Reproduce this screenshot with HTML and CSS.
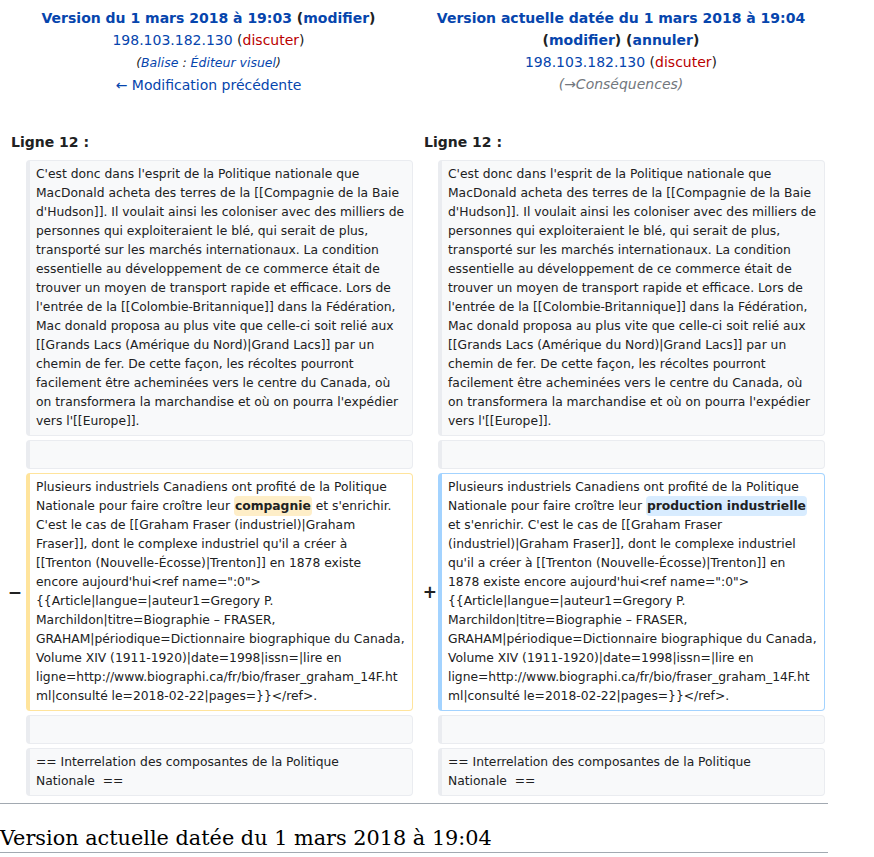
FILE: index.html
```html
<!DOCTYPE html>
<html lang="fr">
<head>
<meta charset="utf-8">
<title>Différence entre versions</title>
<link rel="stylesheet" href="styles.css">
</head>
<body>
<div class="page">
  <div class="diff">
    <div class="title otitle">
      <div class="t-head"><a class="lk" href="#">Version du 1 mars 2018 à 19:03</a> (<a class="lk" href="#">modifier</a>)</div>
      <div><a class="lk" href="#">198.103.182.130</a> (<a class="new" href="#">discuter</a>)</div>
      <div class="tags">(<a class="lk" href="#">Balise</a> : <a class="lk" href="#">Éditeur visuel</a>)</div>
      <div><a class="lk" href="#">← Modification précédente</a></div>
    </div>
    <div class="title ntitle">
      <div class="t-head"><a class="lk" href="#">Version actuelle datée du 1 mars 2018 à 19:04</a></div>
      <div class="t-head">(<a class="lk" href="#">modifier</a>) (<a class="lk" href="#">annuler</a>)</div>
      <div><a class="lk" href="#">198.103.182.130</a> (<a class="new" href="#">discuter</a>)</div>
      <div class="comment">(→Conséquences)</div>
    </div>

    <div class="lineno lineno-l">Ligne 12 :</div>
    <div class="lineno lineno-r">Ligne 12 :</div>

    <div class="marker"></div>
    <div class="line ctx">C'est donc dans l'esprit de la Politique nationale que MacDonald acheta des terres de la [[Compagnie de la Baie d'Hudson]]. Il voulait ainsi les coloniser avec des milliers de personnes qui exploiteraient le blé, qui serait de plus, transporté sur les marchés internationaux. La condition essentielle au développement de ce commerce était de trouver un moyen de transport rapide et efficace. Lors de l'entrée de la [[Colombie-Britannique]] dans la Fédération, Mac donald proposa au plus vite que celle-ci soit relié aux [[Grands Lacs (Amérique du Nord)|Grand Lacs]] par un chemin de fer. De cette façon, les récoltes pourront facilement être acheminées vers le centre du Canada, où on transformera la marchandise et où on pourra l'expédier vers l'[[Europe]].</div>
    <div class="marker"></div>
    <div class="line ctx">C'est donc dans l'esprit de la Politique nationale que MacDonald acheta des terres de la [[Compagnie de la Baie d'Hudson]]. Il voulait ainsi les coloniser avec des milliers de personnes qui exploiteraient le blé, qui serait de plus, transporté sur les marchés internationaux. La condition essentielle au développement de ce commerce était de trouver un moyen de transport rapide et efficace. Lors de l'entrée de la [[Colombie-Britannique]] dans la Fédération, Mac donald proposa au plus vite que celle-ci soit relié aux [[Grands Lacs (Amérique du Nord)|Grand Lacs]] par un chemin de fer. De cette façon, les récoltes pourront facilement être acheminées vers le centre du Canada, où on transformera la marchandise et où on pourra l'expédier vers l'[[Europe]].</div>

    <div class="marker"></div>
    <div class="line ctx"><br></div>
    <div class="marker"></div>
    <div class="line ctx"><br></div>

    <div class="marker">−</div>
    <div class="line del">Plusieurs industriels Canadiens ont profité de la Politique Nationale pour faire croître leur <del class="chg">compagnie</del> et s'enrichir. C'est le cas de [[Graham Fraser (industriel)|Graham Fraser]], dont le complexe industriel qu'il a créer à [[Trenton (Nouvelle-Écosse)|Trenton]] en 1878 existe encore aujourd'hui&lt;ref name=":0"&gt; {{Article|langue=|auteur1=Gregory P. Marchildon|titre=Biographie – FRASER, GRAHAM|périodique=Dictionnaire biographique du Canada, Volume XIV (1911-1920)|date=1998|issn=|lire en ligne=http://www.biographi.ca/fr/bio/fraser_graham_14F.html|consulté le=2018-02-22|pages=}}&lt;/ref&gt;.</div>
    <div class="marker marker-r">+</div>
    <div class="line add">Plusieurs industriels Canadiens ont profité de la Politique Nationale pour faire croître leur <ins class="chg">production industrielle</ins> et s'enrichir. C'est le cas de [[Graham Fraser (industriel)|Graham Fraser]], dont le complexe industriel qu'il a créer à [[Trenton (Nouvelle-Écosse)|Trenton]] en 1878 existe encore aujourd'hui&lt;ref name=":0"&gt; {{Article|langue=|auteur1=Gregory P. Marchildon|titre=Biographie – FRASER, GRAHAM|périodique=Dictionnaire biographique du Canada, Volume XIV (1911-1920)|date=1998|issn=|lire en ligne=http://www.biographi.ca/fr/bio/fraser_graham_14F.html|consulté le=2018-02-22|pages=}}&lt;/ref&gt;.</div>

    <div class="marker"></div>
    <div class="line ctx"><br></div>
    <div class="marker"></div>
    <div class="line ctx"><br></div>

    <div class="marker"></div>
    <div class="line ctx">== Interrelation des composantes de la Politique<br>Nationale  ==</div>
    <div class="marker"></div>
    <div class="line ctx">== Interrelation des composantes de la Politique<br>Nationale  ==</div>
  </div>
  <div class="sep"></div>
  <h2 class="rev-head">Version actuelle datée du 1 mars 2018 à 19:04</h2>
</div>
</body>
</html>
```
FILE: styles.css
```css
html, body {
  margin: 0;
  padding: 0;
  background: #ffffff;
}

body {
  font-family: "DejaVu Sans", sans-serif;
  color: #202122;
  font-size: 14px;
}

.page {
  width: 829px;
}

.diff {
  display: grid;
  grid-template-columns: 18px 387px 17px 387px;
  column-gap: 4px;
  row-gap: 4px;
  padding: 4px;
}

.title {
  text-align: center;
  line-height: 22px;
  padding-top: 3px;
}

.otitle { grid-column: 1 / 3; }
.ntitle { grid-column: 3 / 5; }

.t-head {
  font-weight: bold;
}

.lk {
  color: #0645ad;
  text-decoration: none;
}

.new {
  color: #ba0000;
  text-decoration: none;
}

.tags {
  font-style: italic;
  font-size: 12.5px;
  line-height: 23px;
}

.comment {
  font-style: italic;
  color: #72777d;
}

.lineno {
  font-weight: bold;
  line-height: 22px;
  padding: 31px 0 0 7px;
  margin-bottom: 3px;
}

.lineno-l { grid-column: 1 / 3; }
.lineno-r { grid-column: 3 / 5; }

.marker {
  align-self: center;
  text-align: right;
  font-weight: bold;
  font-size: 17px;
  line-height: 1.2;
  color: #202122;
}

.marker-r {
  margin-right: -3px;
}

.line {
  font-size: 12.32px;
  line-height: 19px;
  padding: 4px 6px;
  border-style: solid;
  border-width: 1px 1px 1px 4px;
  border-radius: 4px;
  white-space: pre-wrap;
  overflow-wrap: break-word;
  word-wrap: break-word;
  color: #202122;
}

.ctx {
  background: #f8f9fa;
  border-color: #eaecf0;
}

.del {
  background: #ffffff;
  border-color: #ffe49c;
}

.add {
  background: #ffffff;
  border-color: #a3d3ff;
}

.chg {
  font-weight: bold;
  text-decoration: none;
  border-radius: 4px;
  padding: 3px 1px;
}

del.chg {
  background: #feeec8;
}

ins.chg {
  background: #d8ecff;
}

.sep {
  border-top: 1px solid #a2a9b1;
  margin-top: 3px;
  width: 828px;
}

.rev-head {
  font-family: "DejaVu Serif", serif;
  font-weight: normal;
  font-size: 20.8px;
  line-height: 1.3;
  margin: 21px 0 0;
  padding: 0;
  border-bottom: 1px solid #a2a9b1;
  width: 828px;
  color: #000;
}
```
